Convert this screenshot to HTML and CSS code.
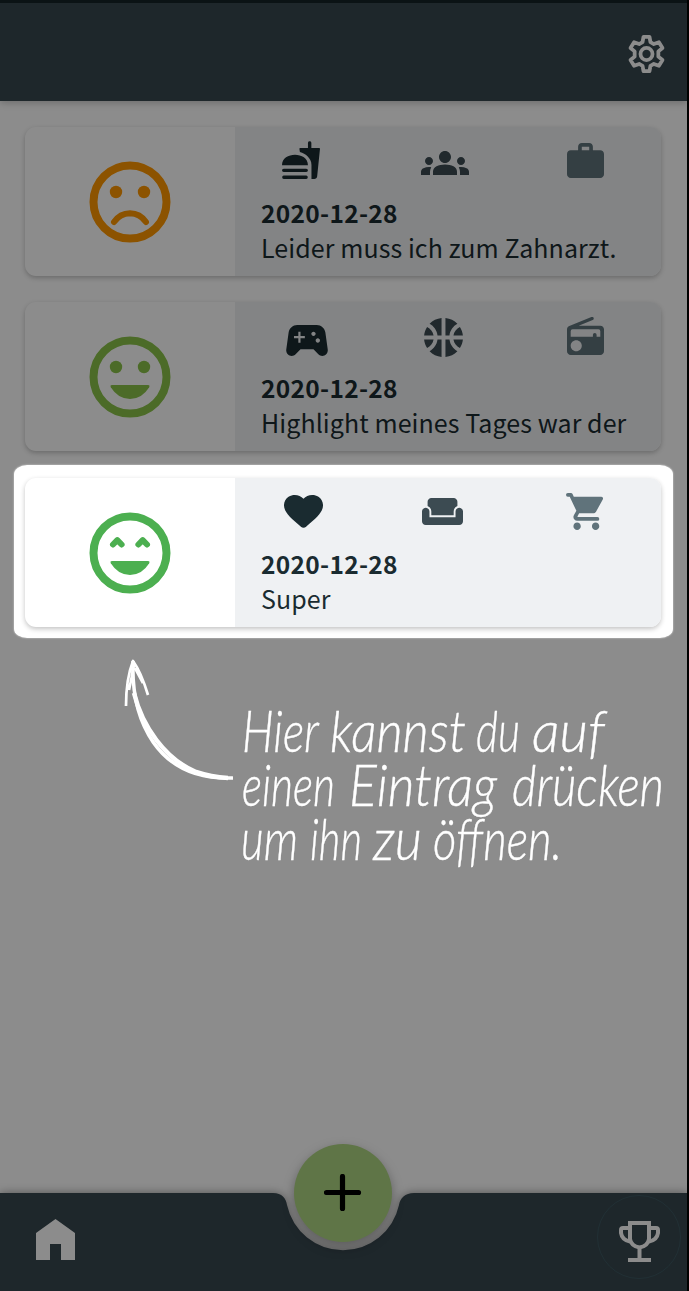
FILE: index.html
```
<!DOCTYPE html>
<html lang="de">
<head>
<meta charset="utf-8">
<title>Tagebuch</title>
<link rel="stylesheet" href="styles.css">
</head>
<body>
<div class="screen">
  <header class="topbar">
    <svg class="gear" viewBox="1.9 1.9 20.2 20.2"><path fill="none" stroke="#fff" stroke-width="2" stroke-linejoin="round" d="M10.400 2.900h3.200l.5 2.800 1.800 1 2.700-1 1.900 3.100-2.200 1.800v2.800l2.200 1.800-1.900 3.100-2.700-1-1.800 1-.5 2.800h-3.200l-.5-2.800-1.800-1-2.700 1-1.900-3.100 2.200-1.800v-2.800L3.500 8.800l1.900-3.100 2.700 1 1.800-1z"/><circle cx="12" cy="12" r="3.200" fill="none" stroke="#fff" stroke-width="2"/></svg>
  </header>

  <main class="entries">
    <article class="card">
      <div class="mood sad">
        <svg viewBox="0 0 82 82"><circle cx="41" cy="41" r="36.500" fill="none" stroke="currentColor" stroke-width="8"/><circle cx="27" cy="31" r="6.200" fill="currentColor"/><circle cx="55" cy="31" r="6.200" fill="currentColor"/><path d="M25 61Q31 52.500 41 52.300Q51 52.500 57 61" fill="none" stroke="currentColor" stroke-width="6" stroke-linecap="round"/></svg>
      </div>
      <div class="info">
        <div class="icons">
          <div><svg class="i-food first" viewBox="1 1 22 22" preserveAspectRatio="none"><path d="M18.060 22.990h1.660c.840 0 1.530-.640 1.630-1.460L23 5.500q0-.450-.450-.450H18V2a1 1 0 0 0-1.970 0v3.050h-4.500q-.470 0-.470.450l.300 1.890c1.710.470 3.310 1.320 4.270 2.260 1.440 1.420 2.430 2.890 2.430 5.290v8.050zM2 21h13.030a1 1 0 0 1 0 1.990H2A1 1 0 0 1 2 21zM16.030 14.990c0-8-15.030-8-15.030 0h15.030zM2 17h13.020a1 1 0 0 1 0 2H2a1 1 0 0 1 0-2z"/></svg></div>
          <div><svg class="i-groups second" viewBox="0 6 24 12" preserveAspectRatio="none"><path d="M12 12.750c1.630 0 3.070.390 4.240.900 1.080.480 1.760 1.560 1.760 2.730V18H6v-1.610c0-1.180.680-2.260 1.760-2.730 1.170-.520 2.610-.910 4.240-.910zM4 13c1.100 0 2-.900 2-2s-.900-2-2-2-2 .900-2 2 .900 2 2 2zm1.130 1.100c-.370-.060-.740-.100-1.130-.100-.990 0-1.930.210-2.780.580C.480 14.900 0 15.620 0 16.430V18h4.500v-1.610c0-.830.230-1.610.630-2.290zM20 13c1.100 0 2-.900 2-2s-.900-2-2-2-2 .900-2 2 .900 2 2 2zm4 3.430c0-.810-.480-1.530-1.220-1.850-.850-.370-1.790-.580-2.780-.580-.390 0-.760.040-1.130.100.400.680.630 1.460.630 2.290V18H24v-1.570zM12 6c1.660 0 3 1.340 3 3s-1.340 3-3 3-3-1.340-3-3 1.340-3 3-3z"/></svg></div>
          <div><svg class="i-work third" viewBox="2 2 20 19" preserveAspectRatio="none"><path d="M20 6h-4V4c0-1.110-.890-2-2-2h-4c-1.110 0-2 .890-2 2v2H4c-1.110 0-1.990.890-1.990 2L2 19c0 1.110.890 2 2 2h16c1.110 0 2-.890 2-2V8c0-1.110-.890-2-2-2zm-6 0h-4V4h4v2z"/></svg></div>
        </div>
        <p class="date">2020-12-28</p>
        <p class="note">Leider muss ich zum Zahnarzt.</p>
      </div>
    </article>

    <article class="card">
      <div class="mood good">
        <svg viewBox="0 0 82 82"><circle cx="41" cy="41" r="36.500" fill="none" stroke="currentColor" stroke-width="8"/><circle cx="27" cy="31" r="6.200" fill="currentColor"/><circle cx="55" cy="31" r="6.200" fill="currentColor"/><path d="M23 49h36q2.200 0 1.200 2.300Q53 63 41 63T21.800 51.300Q20.800 49 23 49z" fill="currentColor"/></svg>
      </div>
      <div class="info">
        <div class="icons">
          <div><svg class="i-game first" viewBox="2.300 5 19.400 14" preserveAspectRatio="none"><path fill-rule="evenodd" d="M21.580 16.090l-1.090-7.660C20.210 6.460 18.520 5 16.530 5H7.470C5.480 5 3.790 6.460 3.510 8.430l-1.090 7.660C2.200 17.630 3.390 19 4.940 19c.680 0 1.320-.270 1.800-.750L9 16h6l2.250 2.250c.480.480 1.130.750 1.800.750 1.560 0 2.750-1.370 2.530-2.910zM11 11H9v2H8v-2H6v-1h2V8h1v2h2v1zm4-1c-.550 0-1-.450-1-1s.450-1 1-1 1 .450 1 1-.450 1-1 1zm2 3c-.550 0-1-.450-1-1s.450-1 1-1 1 .450 1 1-.450 1-1 1z"/></svg></div>
          <div><svg class="i-ball second" viewBox="2 2 20 20"><path d="M17.090 11h4.860c-.160-1.610-.710-3.110-1.540-4.400-1.730.830-2.990 2.450-3.320 4.400zM6.910 11C6.580 9.050 5.320 7.430 3.590 6.600 2.760 7.890 2.210 9.390 2.050 11h4.860zM15.070 11c.320-2.590 1.880-4.790 4.060-6-1.600-1.630-3.740-2.710-6.130-2.950V11h2.070zM8.930 11H11V2.050C8.610 2.290 6.460 3.370 4.870 5c2.180 1.210 3.740 3.410 4.060 6zM15.070 13H13v8.950c2.390-.240 4.540-1.320 6.130-2.950-2.180-1.210-3.740-3.410-4.060-6zM3.590 17.400c1.730-.830 2.990-2.450 3.320-4.400H2.050c.160 1.610.710 3.110 1.540 4.400zM17.090 13c.330 1.950 1.590 3.570 3.320 4.400.830-1.290 1.380-2.790 1.540-4.400h-4.860zM8.930 13c-.320 2.590-1.880 4.790-4.060 6 1.600 1.630 3.740 2.710 6.130 2.950V13H8.930z"/></svg></div>
          <div><svg class="i-radio third" viewBox="2 1.300 20 20.700" preserveAspectRatio="none"><path d="M3.240 6.150C2.510 6.430 2 7.170 2 8v12c0 1.100.890 2 2 2h16c1.110 0 2-.900 2-2V8c0-1.110-.890-2-2-2H8.300l7.600-3.080a.85.85 0 0 0-.7-1.620L3.240 6.150zM7 20c-1.660 0-3-1.340-3-3s1.340-3 3-3 3 1.340 3 3-1.340 3-3 3zm13-8h-2v-1a1 1 0 0 0-2 0v1H4V9q0-1 1-1h14q1 0 1 1v3z"/></svg></div>
        </div>
        <p class="date">2020-12-28</p>
        <p class="note">Highlight meines Tages war der</p>
      </div>
    </article>

    <article class="card selected">
      <div class="mood great">
        <svg viewBox="0 0 82 82"><circle cx="41" cy="41" r="36.500" fill="none" stroke="currentColor" stroke-width="8"/><path d="M24 32.500l4.300-4.300 4.300 4.300M49.400 32.500l4.300-4.300 4.300 4.300" fill="none" stroke="currentColor" stroke-width="6" stroke-linecap="round" stroke-linejoin="round"/><path d="M23 49h36q2.200 0 1.200 2.300Q53 63 41 63T21.800 51.300Q20.800 49 23 49z" fill="currentColor"/></svg>
      </div>
      <div class="info">
        <div class="icons">
          <div><svg class="i-heart first" viewBox="2 3 20 18.350" preserveAspectRatio="none"><path d="M13.350 20.130c-.760.690-1.930.690-2.690-.010l-.110-.100C5.300 15.270 1.870 12.160 2 8.280c.060-1.700.930-3.330 2.340-4.290 2.640-1.800 5.900-.960 7.660 1.100 1.760-2.060 5.020-2.910 7.660-1.100 1.410.960 2.280 2.590 2.340 4.290.140 3.880-3.300 6.990-8.550 11.760l-.100.090z"/></svg></div>
          <div><svg class="i-sofa second" viewBox="1 5 22 14" preserveAspectRatio="none"><path d="M21 10c-1.100 0-2 .900-2 2v3H5v-3c0-1.100-.900-2-2-2s-2 .900-2 2v5c0 1.100.900 2 2 2h18c1.100 0 2-.900 2-2v-5c0-1.100-.900-2-2-2zm-3-5H6c-1.100 0-2 .900-2 2v2.150c1.160.410 2 1.510 2 2.820V14h12v-2.030c0-1.300.840-2.400 2-2.820V7c0-1.100-.900-2-2-2z"/></svg></div>
          <div><svg class="i-cart third" viewBox="1 2 20 20" preserveAspectRatio="none"><path d="M7 18c-1.100 0-1.990.900-1.990 2S5.900 22 7 22s2-.900 2-2-.900-2-2-2zM2 2a1 1 0 0 0 0 2h1l3.600 7.590-1.350 2.450C4.520 15.370 5.480 17 7 17h11a1 1 0 0 0 0-2H7.420c-.140 0-.250-.110-.250-.250l.930-1.750h7.450c.750 0 1.410-.410 1.750-1.030l3.580-6.490A1 1 0 0 0 20.010 4H5.210l-.670-1.430A1 1 0 0 0 3.640 2zm15 16c-1.100 0-1.990.900-1.990 2s.890 2 1.990 2 2-.900 2-2-.900-2-2-2z"/></svg></div>
        </div>
        <p class="date">2020-12-28</p>
        <p class="note">Super</p>
      </div>
    </article>
  </main>

  <footer class="nav">
    <svg class="navshape" viewBox="0 0 687 98"><path d="M0 0H273C282 0 286 5 287 12A57.300 57.300 0 0 0 399 12C400 5 405 0 414 0H687V98H0z"/></svg>
    <svg class="home" viewBox="0 0 39 41"><path fill="#fff" d="M0 41V14L19.500 0 39 14V41H25V25H14V41z"/></svg>
    <div class="fab"><svg viewBox="0 0 38 38"><path d="M18.500 2.500v32M2.500 18.500h32" stroke="#000" stroke-width="5.200" stroke-linecap="round"/></svg></div>
    <div class="ripple"><svg viewBox="0 0 41 41"><path fill="none" stroke="#fff" stroke-width="4" d="M11 2H30V18Q29 25 20.500 26.500Q12 25 11 18zM11 7H4q-2 0-2 2v3Q3 19 11 20.500M30 7H37q2 0 2 2v3Q38 19 30 20.500M20.500 26V37M9 39H32"/></svg></div>
  </footer>

  <div class="spotlight"></div>

  <svg class="hint" viewBox="0 0 567 230">
    <path class="arrow" d="M13 9C11 67 36 129 113 126"/>
    <path class="arrow brush" d="M14 41C22 74 45 107 76 120Q91 125 108 126"/>
    <path class="arrow tip" d="M6 54Q6 27 13 9Q21 20 28 43M9 38Q12 25 14 12M15 16L23 31"/>
    <g class="hand">
      <text y="100"><tspan x="122" textLength="76" lengthAdjust="spacingAndGlyphs">Hier</tspan> <tspan x="210" textLength="136" lengthAdjust="spacingAndGlyphs">kannst</tspan> <tspan x="356" textLength="44" lengthAdjust="spacingAndGlyphs">du</tspan> <tspan x="412" textLength="73" lengthAdjust="spacingAndGlyphs">auf</tspan></text>
      <text y="154"><tspan x="122" textLength="93" lengthAdjust="spacingAndGlyphs">einen</tspan> <tspan x="229" textLength="148" lengthAdjust="spacingAndGlyphs">Eintrag</tspan> <tspan x="392" textLength="152" lengthAdjust="spacingAndGlyphs">drücken</tspan></text>
      <text y="208"><tspan x="121" textLength="57" lengthAdjust="spacingAndGlyphs">um</tspan> <tspan x="190" textLength="52" lengthAdjust="spacingAndGlyphs">ihn</tspan> <tspan x="253" textLength="49" lengthAdjust="spacingAndGlyphs">zu</tspan> <tspan x="313" textLength="129" lengthAdjust="spacingAndGlyphs">öffnen.</tspan></text>
    </g>
  </svg>
</div>
</body>
</html>
```
FILE: styles.css
```
* { box-sizing: border-box; }

body {
  margin: 0;
  background: #000;
}

.screen {
  position: relative;
  display: flex;
  flex-direction: column;
  width: 687px;
  height: 1291px;
  background: #fff;
  overflow: hidden;
}

.topbar {
  display: flex;
  justify-content: flex-end;
  flex: none;
  height: 101px;
  padding: 32px 21px 0 0;
  background: #37474f;
  border-top: 3px solid #152327;
  box-shadow: 0 2px 7px rgba(0, 0, 0, .22);
}

.gear { width: 39px; height: 38px; }

.entries {
  display: flex;
  flex-direction: column;
  gap: 26px;
  padding: 26px 26px 0 25px;
}

.card {
  display: flex;
  height: 149px;
  border-radius: 11px;
  background: #fff;
  box-shadow: 0 2px 5px rgba(0, 0, 0, .24);
  overflow: hidden;
}

.selected { margin-top: 1px; }

.mood {
  display: flex;
  align-items: center;
  justify-content: center;
  flex: 0 0 210px;
}

.mood svg { width: 82px; height: 82px; }
.sad { color: #ff9800; }
.good { color: #8bc34a; }
.great { color: #4caf50; }

.info {
  flex: 1;
  padding-top: 12px;
  background: #eff1f3;
}

.icons {
  display: grid;
  grid-template-columns: repeat(3, 142px);
  height: 56px;
}

.icons svg { display: block; }
.first { fill: #1a2b30; }
.second { fill: #3c4b52; }
.third { fill: #60737b; }

.i-food { width: 38px; height: 38px; margin: 2px 0 0 47px; }
.i-groups { width: 48px; height: 24px; margin: 12px 0 0 44px; }
.i-work { width: 37px; height: 35px; margin: 4px 0 0 48px; }
.i-game { width: 42px; height: 31px; margin: 11px 0 0 51px; }
.i-ball { width: 39px; height: 39px; margin: 4px 0 0 47px; }
.i-radio { width: 37px; height: 38px; margin: 3px 0 0 48px; }
.i-heart { width: 39px; height: 34px; margin: 5px 0 0 49px; }
.i-sofa { width: 41px; height: 27px; margin: 8px 0 0 45px; }
.i-cart { width: 37px; height: 37px; margin: 3px 0 0 46.500px; }

.date,
.note {
  margin: 0;
  padding-left: 26px;
  color: #1a2b30;
  font-family: "Noto Sans CJK SC", "Noto Sans", sans-serif;
  line-height: 35px;
  white-space: nowrap;
}

.date {
  font-size: 24.500px;
  font-weight: 700;
  letter-spacing: .3px;
}

.note {
  font-size: 25px;
  letter-spacing: .08px;
}

.nav {
  position: relative;
  display: flex;
  justify-content: space-between;
  margin-top: auto;
  height: 98px;
  padding: 0 6px 0 36px;
}

.navshape {
  position: absolute;
  inset: 0;
  width: 687px;
  height: 98px;
  fill: #37474f;
  overflow: visible;
  filter: drop-shadow(0 0 5px rgba(0, 0, 0, .4));
}

.home {
  position: relative;
  width: 39px;
  height: 41px;
  margin-top: 26px;
}

.fab {
  position: absolute;
  left: 294px;
  top: -49px;
  display: grid;
  place-items: center;
  width: 98px;
  height: 98px;
  border-radius: 50%;
  background: #aed581;
  box-shadow: 0 5px 12px rgba(0, 0, 0, .35);
}

.fab svg { width: 38px; height: 38px; }

.ripple {
  position: relative;
  display: flex;
  justify-content: center;
  width: 84px;
  height: 84px;
  margin-top: 2px;
  padding-top: 25px;
  border: 1px solid #3d5860;
  border-radius: 50%;
}

.ripple svg { width: 41px; height: 41px; }

/* Everything outside the spotlight is dimmed by its outer shadow. */
.spotlight {
  position: absolute;
  left: 14px;
  top: 465px;
  width: 659px;
  height: 173px;
  border-radius: 13px / 9px;
  box-shadow: 0 0 2px rgba(255, 255, 255, .7), 0 0 0 1400px rgba(0, 0, 0, .45);
}

.hint {
  position: absolute;
  left: 120px;
  top: 652px;
  width: 567px;
  height: 230px;
}

.arrow {
  fill: none;
  stroke: #fff;
  stroke-width: 3.500;
}

.brush { stroke-width: 4.500; }
.tip { stroke-width: 2.700; stroke-linejoin: round; }

.hand {
  fill: #fff;
  stroke: #fff;
  stroke-width: .4;
  font-family: Lato, "Open Sans", sans-serif;
  font-size: 58px;
  font-style: italic;
  font-weight: 300;
}
```
